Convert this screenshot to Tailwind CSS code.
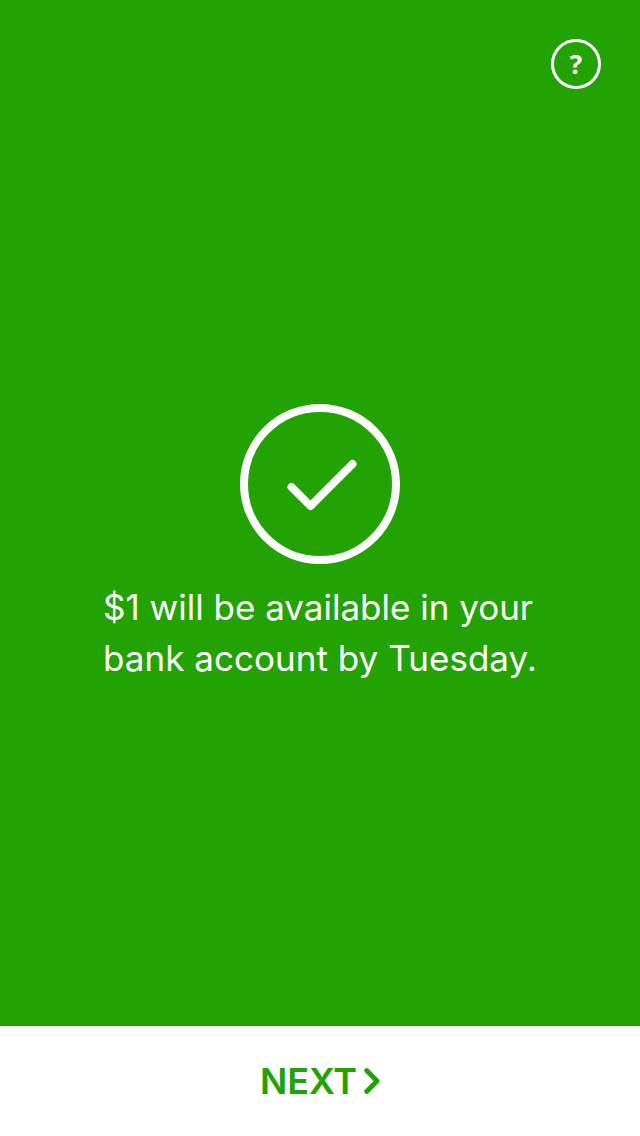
<!DOCTYPE html>
<html lang="en">
<head>
    <meta charset="UTF-8">
    <meta name="viewport" content="width=device-width, initial-scale=1.0">
    <title>Cash Out Complete</title>
    <script src="https://cdn.jsdelivr.net/npm/@tailwindcss/browser@4"></script>
</head>
<body class="bg-[#23a303] font-['Inter',sans-serif]">
    <div class="flex flex-col h-[1136px]">
        <!-- Help -->
        <header class="flex justify-end pt-[39px] pr-[39px]">
            <button aria-label="Help" class="flex items-center justify-center size-[50px] rounded-full border-3 border-white text-white text-[26px] leading-none font-bold font-['Open_Sans',sans-serif]">?</button>
        </header>

        <!-- Confirmation -->
        <main class="flex-1 flex flex-col items-center pt-[315px] text-white">
            <svg class="size-40" viewBox="0 0 160 160" fill="none" stroke="currentColor" stroke-width="8" stroke-linecap="round" stroke-linejoin="round">
                <circle cx="80" cy="80" r="76"/>
                <path d="M51.5 83l19 19 42-42"/>
            </svg>
            <p class="mt-[18px] w-[434px] text-[35px] leading-[51px] font-normal whitespace-nowrap">
                <span class="block">$1 will be available in your</span>
                <span class="block tracking-[0.03px]">bank account by Tuesday.</span>
            </p>
        </main>

        <!-- Next -->
        <footer class="h-[110px] bg-white">
            <button class="flex items-center justify-center w-full h-full gap-[7px] text-[#23a303]">
                <span class="text-[36px] leading-none font-semibold tracking-[-0.1px]">NEXT</span>
                <svg class="w-4 h-7" viewBox="0 0 16 28" fill="none" stroke="currentColor" stroke-width="4.8" stroke-linecap="round" stroke-linejoin="round">
                    <path d="M2.7 3.5L13 14 2.7 24.5"/>
                </svg>
            </button>
        </footer>
    </div>
</body>
</html>
